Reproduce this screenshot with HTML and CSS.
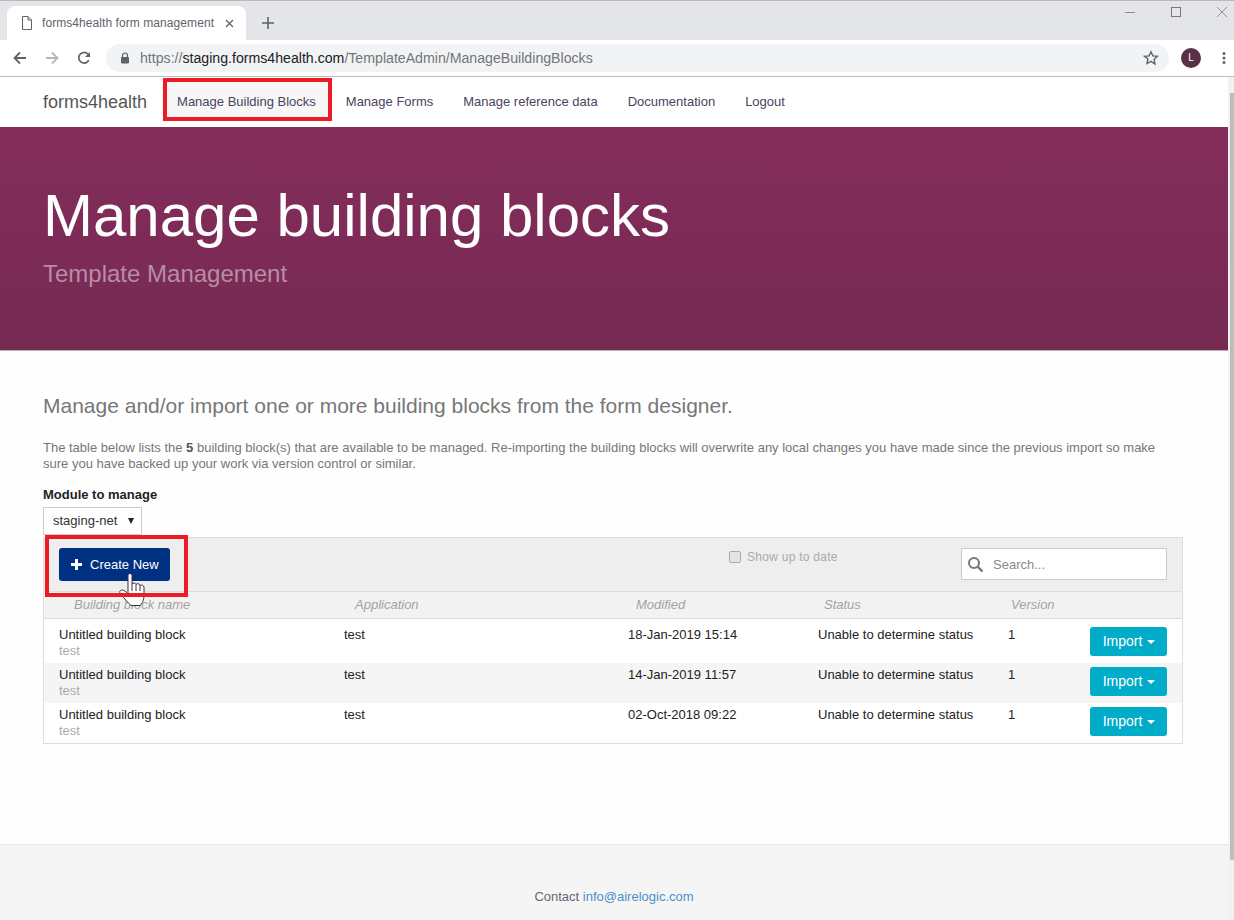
FILE: index.html
```html
<!DOCTYPE html>
<html lang="en">
<head>
<meta charset="utf-8">
<title>forms4health form management</title>
<link rel="stylesheet" href="styles.css">
</head>
<body>
<div class="window">
  <div class="tabstrip">
    <div class="tab">
      <svg class="tab-doc" width="12" height="14" viewBox="0 0 12 14"><path d="M1.500.5h5.500l3.500 3.500v9.500h-9z M7 .5v3.500h3.500" fill="none" stroke="#5f6368" stroke-width="1"/></svg>
      <span class="tab-title">forms4health form management</span>
      <svg class="tab-x" width="9" height="9" viewBox="0 0 9 9"><path d="M1 1l7 7M8 1l-7 7" stroke="#5f6368" stroke-width="1.300"/></svg>
    </div>
    <svg class="newtab" width="12" height="12" viewBox="0 0 12 12"><path d="M6 0v12M0 6h12" stroke="#5f6368" stroke-width="1.600"/></svg>
    <div class="winctl">
      <svg width="12" height="12" viewBox="0 0 12 12"><path d="M1 6.500h10" stroke="#8a8a90" stroke-width="1"/></svg>
      <svg width="12" height="12" viewBox="0 0 12 12"><rect x="1.500" y="1.500" width="9" height="9" fill="none" stroke="#77777d" stroke-width="1"/></svg>
      <svg width="12" height="12" viewBox="0 0 12 12"><path d="M1 1l10 10M11 1L1 11" stroke="#a08c94" stroke-width="1"/></svg>
    </div>
  </div>
  <div class="toolbar">
    <svg class="tool" width="14" height="14" viewBox="0 0 14 14"><path d="M13 7H2M7 1.500L1.500 7 7 12.500" fill="none" stroke="#5f6368" stroke-width="1.800"/></svg>
    <svg class="tool" width="14" height="14" viewBox="0 0 14 14"><path d="M1 7h11M7 1.500L12.500 7 7 12.500" fill="none" stroke="#b4b6ba" stroke-width="1.800"/></svg>
    <svg class="tool reload" width="14" height="14" viewBox="0 0 14 14"><path d="M11.800 9.200A5.300 5.300 0 1 1 11 3.200" fill="none" stroke="#5f6368" stroke-width="1.700"/><path d="M13 1v5H8z" fill="#5f6368"/></svg>
    <div class="omnibox">
      <svg class="lock" width="10" height="12" viewBox="0 0 10 12"><path d="M2.500 5V3.500a2.500 2.500 0 0 1 5 0V5" fill="none" stroke="#5f6368" stroke-width="1.200"/><rect x="1" y="5" width="8" height="6.500" rx="1" fill="#5f6368"/></svg>
      <span class="url"><span class="url-dim">https://</span>staging.forms4health.com<span class="url-dim">/TemplateAdmin/ManageBuildingBlocks</span></span>
      <svg class="star" width="16" height="16" viewBox="0 0 16 16"><path d="M8 1.800l1.900 4.100 4.500.5-3.300 3.100.9 4.500L8 11.300l-4 2.200.9-4.500L1.600 6.400l4.500-.5z" fill="none" stroke="#5f6368" stroke-width="1.400"/></svg>
    </div>
    <div class="avatar">L</div>
    <svg class="kebab" width="4" height="14" viewBox="0 0 4 14"><circle cx="2" cy="2.500" r="1.500" fill="#5f6368"/><circle cx="2" cy="7" r="1.500" fill="#5f6368"/><circle cx="2" cy="11.500" r="1.500" fill="#5f6368"/></svg>
  </div>
  <div class="viewport">
    <div class="page">
      <nav class="navbar">
        <a class="brand">forms4health</a>
        <a class="navlink current">Manage Building Blocks<span class="redbox redbox-nav"></span></a>
        <a class="navlink">Manage Forms</a>
        <a class="navlink">Manage reference data</a>
        <a class="navlink">Documentation</a>
        <a class="navlink">Logout</a>
      </nav>
      <header class="hero">
        <h1>Manage building blocks</h1>
        <p class="subtitle">Template Management</p>
      </header>
      <main class="content">
        <p class="lead">Manage and/or import one or more building blocks from the form designer.</p>
        <p class="intro">The table below lists the <b>5</b> building block(s) that are available to be managed. Re-importing the building blocks will overwrite any local changes you have made since the previous import so make sure you have backed up your work via version control or similar.</p>
        <label class="module-label">Module to manage</label>
        <div class="select">staging-net<i class="select-caret"></i></div>
        <section class="grid">
          <div class="grid-tools">
            <button class="btn-create"><svg class="plus" width="11" height="11" viewBox="0 0 11 11"><path d="M4 0h3v4h4v3H7v4H4V7H0V4h4z" fill="#fff"/></svg>Create New</button>
            <svg class="cursor" width="27" height="33" viewBox="0 0 27 33"><path d="M9 2.500C9 0 13 0 13 2.500V11C14 9.500 16.500 10 17 11.500 18 10 20.500 10.500 21 12.500 22 11.500 25 12 25 14.500V22C25 27 23 31 21 32.500H12C9 30 6 26 1.500 21 0 19 1 17 3 17 5 17 7.500 19 9 21Z" fill="#fff" stroke="#333" stroke-width="1"/><path d="M13 11v7M17 11.500V18M21 12.500V18" fill="none" stroke="#333" stroke-width="1"/></svg>
            <span class="redbox redbox-create"></span>
            <label class="uptodate"><span class="check"></span>Show up to date</label>
            <div class="search">
              <svg width="17" height="17" viewBox="0 0 17 17"><circle cx="7" cy="7" r="5" fill="none" stroke="#777" stroke-width="2"/><path d="M10.500 10.500L15.500 15.500" stroke="#777" stroke-width="2.400"/></svg>
              <span>Search...</span>
            </div>
          </div>
          <div class="row head">
            <span class="c-name head-first">Building block name</span>
            <span class="c-app">Application</span>
            <span class="c-mod">Modified</span>
            <span class="c-status">Status</span>
            <span class="c-ver">Version</span>
          </div>
          <div class="rows">
            <div class="row item">
              <div class="c-name">Untitled building block<small>test</small></div>
              <div class="c-app">test</div>
              <div class="c-mod">18-Jan-2019 15:14</div>
              <div class="c-status">Unable to determine status</div>
              <div class="c-ver">1</div>
              <button class="btn-import">Import<i class="caret"></i></button>
            </div>
            <div class="row item alt">
              <div class="c-name">Untitled building block<small>test</small></div>
              <div class="c-app">test</div>
              <div class="c-mod">14-Jan-2019 11:57</div>
              <div class="c-status">Unable to determine status</div>
              <div class="c-ver">1</div>
              <button class="btn-import">Import<i class="caret"></i></button>
            </div>
            <div class="row item">
              <div class="c-name">Untitled building block<small>test</small></div>
              <div class="c-app">test</div>
              <div class="c-mod">02-Oct-2018 09:22</div>
              <div class="c-status">Unable to determine status</div>
              <div class="c-ver">1</div>
              <button class="btn-import">Import<i class="caret"></i></button>
            </div>
          </div>
        </section>
      </main>
      <footer class="footer">Contact <a>info@airelogic.com</a></footer>
    </div>
    <div class="scrollbar"><div class="thumb"></div></div>
  </div>
</div>
</body>
</html>
```
FILE: styles.css
```css
* { box-sizing: border-box; }
html, body { margin: 0; padding: 0; height: 100%; overflow: hidden; background: #fff; }
body { font-family: "Liberation Sans", Arial, sans-serif; }
.window { height: 920px; display: flex; flex-direction: column; overflow: hidden; }

.tabstrip { height: 40px; flex: none; background: #e3e5e8; border-top: 1px solid #b9b9bc; display: flex; align-items: flex-end; padding-left: 7px; }
.tab { width: 239px; height: 34px; background: #fff; border-radius: 8px 8px 0 0; display: flex; align-items: center; padding-left: 14px; }
.tab-doc { flex: none; }
.tab-title { margin-left: 9px; font-size: 12px; letter-spacing: .07px; color: #5f6368; white-space: nowrap; width: 183px; flex: none; }
.tab-x { flex: none; }
.newtab { margin: 0 0 11px 16px; }
.winctl { margin-left: auto; align-self: flex-start; display: flex; gap: 34px; padding: 5px 6px 0 0; }

.toolbar { height: 37px; flex: none; background: #fff; border-bottom: 1px solid #bdbdc0; display: flex; align-items: center; padding: 0 7px 0 13px; }
.tool { flex: none; margin-right: 18px; }
.reload { margin-right: 15px; }
.omnibox { width: 1063px; height: 28px; background: #f1f3f4; border-radius: 14px; display: flex; align-items: center; padding: 0 10px 0 14px; flex: none; }
.lock { flex: none; }
.url { margin-left: 10px; font-size: 14.15px; color: #202124; white-space: nowrap; }
.url-dim { color: #72767b; }
.star { margin-left: auto; flex: none; }
.avatar { flex: none; width: 20px; height: 20px; margin-left: 12px; border-radius: 50%; background: #5a3048; color: #fff; font-size: 10px; line-height: 20px; text-align: center; }
.kebab { flex: none; margin-left: 21px; }

.viewport { flex: 1; display: flex; min-height: 0; }
.page { flex: 1; min-width: 0; display: flex; flex-direction: column; }
.scrollbar { width: 6px; flex: none; background: #f1f1f1; padding-top: 16px; }
.thumb { height: 767px; background: #bdbdbd; margin-left: 2px; }

.navbar { height: 50px; flex: none; display: flex; align-items: center; padding-left: 43px; background: #fff; }
.brand { font-size: 18px; color: #555; margin-right: 15px; }
.navlink { font-size: 13px; color: #4a4360; padding: 0 15px; height: 50px; line-height: 50px; position: relative; white-space: nowrap; }
.current { background: #f7f7f7; height: 43px; line-height: 47px; margin-bottom: 6px; }
.redbox { position: absolute; z-index: 3; border: 4px solid #ed1c24; pointer-events: none; }
.redbox-nav { left: 1px; top: 0; right: -1px; bottom: 0; }

.hero { height: 224px; flex: none; background: linear-gradient(#842d5b, #762a52); padding: 51px 0 0 43px; border-bottom: 1px solid #b9b0b5; }
.hero h1 { margin: 0; font-size: 60px; line-height: 76px; font-weight: 400; color: #fff; }
.subtitle { margin: 5px 0 0; font-size: 24px; line-height: 30px; color: #b88da5; }

.content { flex: none; height: 494px; padding: 42px 45px 0 43px; background: #fefefe; border-bottom: 1px solid #e7e7e7; }
.lead { margin: 0; font-size: 21px; line-height: 26px; color: #777; }
.intro { margin: 21px 0 0; font-size: 13px; line-height: 16px; color: #777; }
.intro b { color: #555; }
.module-label { display: block; margin-top: 15px; font-size: 13px; line-height: 16px; font-weight: 700; color: #222; }
.select { width: 99px; height: 28px; margin-top: 4px; border: 1px solid #ccc; background: #fff; font-size: 13px; line-height: 26px; color: #333; padding: 0 7px 0 9px; display: flex; align-items: center; justify-content: space-between; }
.select-caret { border-top: 6px solid #222; border-left: 3px solid transparent; border-right: 3px solid transparent; }

.grid { width: 1140px; border: 1px solid #ddd; margin-top: 2px; background: #fff; }
.grid-tools { height: 54px; background: #eee; border-bottom: 1px solid #ddd; position: relative; display: flex; align-items: flex-start; padding: 10px 15px 0; }
.btn-create { height: 33px; width: 111px; border: 0; border-radius: 3px; background: #003082; color: #fff; font: 13px "Liberation Sans", Arial, sans-serif; padding: 0; display: flex; align-items: center; }
.plus { margin: 0 8px 0 12px; flex: none; }
.redbox-create { left: 1px; top: -3px; width: 143px; height: 62px; }
.cursor { position: absolute; z-index: 2; left: 75px; top: 35px; }
.uptodate { margin-left: 559px; display: flex; align-items: center; font-size: 12px; color: #aaa; letter-spacing: .27px; height: 18px; }
.check { width: 12px; height: 12px; border: 1px solid #aaa; border-radius: 2px; background: #e4e4e4; margin-right: 6px; }
.search { margin-left: auto; width: 206px; height: 32px; background: #fff; border: 1px solid #ccc; display: flex; align-items: center; padding-left: 5px; font-size: 13px; color: #888; }
.search span { margin-left: 9px; }

.rows { padding-top: 4px; }
.row { display: flex; position: relative; font-size: 13px; }
.head { height: 27px; background: #f2f2f2; border-bottom: 1px solid #ddd; font-style: italic; color: #a8a29c; line-height: 25px; }
.item { height: 40px; color: #222; line-height: 16px; padding-top: 4px; }
.alt { background: #f5f5f5; }
.c-name { width: 300px; padding-left: 15px; }
.head-first { padding-left: 30px; }
.c-name small { display: block; font-size: 13px; color: #aaa; }
.c-app { width: 284px; }
.c-mod { width: 190px; }
.c-status { width: 190px; }
.c-ver { width: 60px; }
.head .c-app { padding-left: 11px; }
.head .c-mod { padding-left: 8px; }
.head .c-status { padding-left: 6px; }
.head .c-ver { padding-left: 3px; }
.btn-import { position: absolute; right: 15px; top: 4px; width: 77px; height: 29px; border: 0; border-radius: 3px; background: #00acc8; color: #fff; font: 14px "Liberation Sans", Arial, sans-serif; padding: 0 0 2px 1px; }
.caret { display: inline-block; margin-left: 5px; vertical-align: middle; border-top: 4px solid #fff; border-left: 4px solid transparent; border-right: 4px solid transparent; }

.footer { flex: 1; background: #f5f5f5; text-align: center; padding-top: 44px; font-size: 13px; line-height: 16px; color: #667; }
.footer a { color: #4d8fcc; }
```
